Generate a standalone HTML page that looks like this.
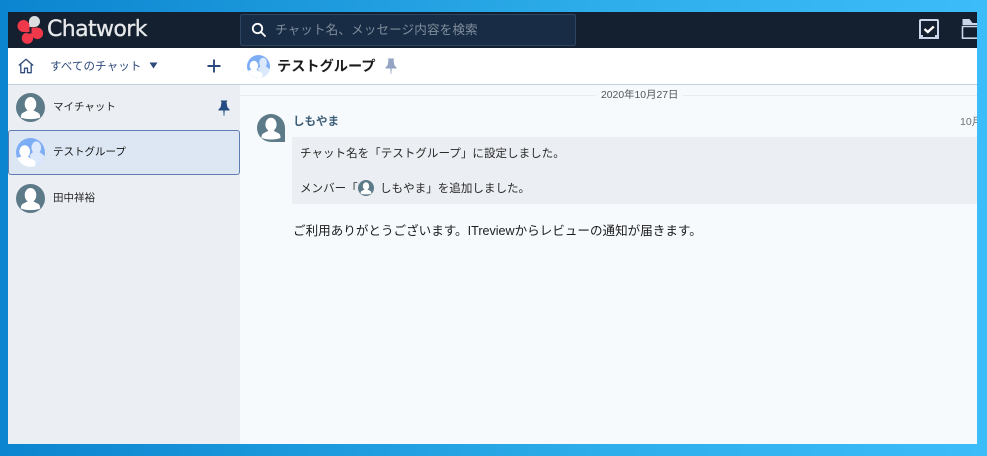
<!DOCTYPE html>
<html lang="ja">
<head>
<meta charset="utf-8">
<style>
html,body{margin:0;padding:0;width:987px;height:456px;overflow:hidden}
body{position:relative;background:linear-gradient(90deg,#0b85cf 0%,#1c98dc 30%,#2dade9 60%,#3cbdf9 100%);font-family:"Liberation Sans","Noto Sans CJK JP",sans-serif}
.a{position:absolute;white-space:nowrap}
svg{position:absolute;display:block}
#win{position:absolute;left:8px;top:12px;width:969px;height:432px;overflow:hidden;background:#f6fafd}
</style>
</head>
<body>
<div id="win">
  <div class="a" style="left:0;top:0;width:969px;height:36px;background:#14202f"></div>
  <div class="a" style="left:0;top:36px;width:969px;height:36px;background:#fff"></div>
  <div class="a" style="left:0;top:72px;width:232px;height:360px;background:#ebeef3"></div>
  <div class="a" style="left:0;top:72px;width:969px;height:1px;background:#c5d0df"></div>
  <div class="a" style="left:232px;top:83px;width:737px;height:1px;background:#e9edf2"></div>

  <!-- search -->
  <div class="a" style="left:232px;top:2px;width:334px;height:30px;background:#182d45;border:1px solid #2b4563;border-radius:2px"></div>
  <div class="a" style="left:267px;top:9px;font-size:12.6px;line-height:18px;color:#7f8c9b;letter-spacing:.1px">チャット名、メッセージ内容を検索</div>
  <div class="a" style="left:39px;top:4px;font-size:22px;line-height:28px;color:#e6e8eb;font-family:'DejaVu Sans','Liberation Sans',sans-serif;letter-spacing:-.6px;-webkit-text-stroke:.3px #e6e8eb">Chatwork</div>

  <!-- second row text -->
  <div class="a" style="left:42px;top:46px;font-size:11.5px;line-height:18px;color:#2f4a7c;letter-spacing:.1px">すべてのチャット</div>
  <div class="a" style="left:269px;top:45px;font-size:14.2px;line-height:20px;font-weight:bold;color:#1c1c1c">テストグループ</div>

  <!-- sidebar items -->
  <div class="a" style="left:0;top:118px;width:230px;height:43px;background:#dce7f3;border:1px solid #5f7db0;border-radius:3px"></div>
  <div class="a" style="left:45px;top:86px;font-size:10.5px;line-height:18px;color:#222">マイチャット</div>
  <div class="a" style="left:45px;top:131px;font-size:10.5px;line-height:18px;color:#111">テストグループ</div>
  <div class="a" style="left:45px;top:177px;font-size:10.5px;line-height:18px;color:#222">田中祥裕</div>

  <!-- messages -->
  <div class="a" style="left:588px;top:76px;padding:0 5px;background:#f6fafd;font-size:10.4px;line-height:16px;color:#555">2020年10月27日</div>
  <div class="a" style="left:285px;top:101px;font-size:11.5px;line-height:18px;font-weight:bold;color:#3f5f78">しもやま</div>
  <div class="a" style="left:952px;top:102px;font-size:10.5px;line-height:16px;color:#6e6e6e">10月</div>
  <div class="a" style="left:284px;top:125px;width:685px;height:67px;background:#ebeef2"></div>
  <div class="a" style="left:292px;top:133px;font-size:11.55px;line-height:18px;color:#2a2a2a">チャット名を「テストグループ」に設定しました。</div>
  <div class="a" style="left:292px;top:168px;font-size:11.55px;line-height:18px;color:#2a2a2a">メンバー「</div>
  <div class="a" style="left:372px;top:168px;font-size:11.55px;line-height:18px;color:#2a2a2a">しもやま」を追加しました。</div>
  <div class="a" style="left:285px;top:210px;font-size:12.57px;line-height:18px;color:#1c1c1c">ご利用ありがとうございます。ITreviewからレビューの通知が届きます。</div>
</div>

<!-- logo -->
<svg style="left:0;top:0" width="50" height="48" viewBox="0 0 50 48">
  <path d="M29 21.500a5.500 5.500 0 1 1 5.500 5.500H29z" fill="#dcdde0"/>
  <path d="M23.500 20a6 6 0 1 0 0 12h6v-6a6 6 0 0 0-6-6z" fill="#f0384b"/>
  <path d="M31.500 27.500h5.500a5.800 5.800 0 1 1-5.500 5.800z" fill="#f0384b"/>
  <path d="M32.500 33.500l.6 4.200a5.700 5.700 0 1 1-5.700-5.200l-.4 1z" fill="#f0384b"/>
</svg>

<!-- search icon -->
<svg style="left:250px;top:21px" width="18" height="18" viewBox="0 0 18 18" fill="none" stroke="#fff" stroke-width="1.800"><circle cx="7.500" cy="7.500" r="4.700"/><path d="M11 11l4 4" stroke-linecap="round"/></svg>

<!-- task icon -->
<svg style="left:918px;top:18px" width="23" height="23" viewBox="0 0 23 23" fill="none"><rect x="2" y="2" width="18" height="18" rx="1" stroke="#c9d6ea" stroke-width="2"/><path d="M6.500 11l3.300 3 6-5.500" stroke="#fff" stroke-width="2.400"/><path d="M1 17h4v4H1zM17 17h4v4h-4z" fill="#c9d6ea"/></svg>
<!-- folder icon -->
<svg style="left:961px;top:18px" width="16" height="23" viewBox="0 0 16 23" fill="none"><path d="M1.500 1h7l3 4h4.500v2H1.500z" fill="#c9d6ea"/><path d="M1.500 8.500h15M1.500 8v12.200h15" stroke="#c9d6ea" stroke-width="1.600"/></svg>

<!-- home -->
<svg style="left:18px;top:58px" width="16" height="16" viewBox="0 0 16 16" fill="none" stroke="#2f4a7c" stroke-width="1.300" stroke-linejoin="round"><path d="M.8 7.500L8 1.300l7.200 6.200M2.800 6.500v8.200h3.700v-4.500h3v4.500h3.700V6.500"/></svg>
<!-- caret -->
<svg style="left:149px;top:62px" width="9" height="7" viewBox="0 0 9 7"><path d="M.5 .5h8L4.500 6.500z" fill="#2f4a7c"/></svg>
<!-- plus -->
<svg style="left:207px;top:59px" width="14" height="14" viewBox="0 0 14 14"><path d="M7 .5v13M.5 7h13" stroke="#2f4a7c" stroke-width="1.900"/></svg>

<svg width="0" height="0" style="left:0;top:0"><defs><clipPath id="cc"><circle cx="15" cy="15" r="15"/></clipPath></defs></svg>
<!-- header group avatar -->
<svg style="left:247px;top:55px" width="23" height="23" viewBox="0 0 30 30">
  <g clip-path="url(#cc)"><rect width="30" height="30" fill="#7dadf5"/>
  <ellipse cx="21" cy="10" rx="5" ry="6.500" fill="#dce8fb"/><path d="M17 15h8l5 4v8l-10 3-6-12z" fill="#dce8fb"/>
  <ellipse cx="9" cy="14" rx="5.500" ry="6.500" fill="#fff"/><path d="M6 19h6l8 5v6H0v-9z" fill="#fff"/></g>
</svg>
<!-- header pin -->
<svg style="left:385px;top:58px" width="12" height="16" viewBox="0 0 12 16"><path d="M2.500 .5h7l-1 1.500.8 5 2.200 2.500v1H.5v-1L2.700 7l.8-5zM5.300 10.500h1.400L6.300 16h-.6z" fill="#94a5c4"/></svg>
<!-- sidebar pin -->
<svg style="left:218px;top:100px" width="12" height="16" viewBox="0 0 12 16"><path d="M2.500 .5h7l-1 1.500.8 5 2.200 2.500v1H.5v-1L2.700 7l.8-5zM5.300 10.500h1.400L6.300 16h-.6z" fill="#264b80"/></svg>

<!-- avatars -->
<svg style="left:16px;top:93px" width="29" height="29" viewBox="0 0 30 30"><g clip-path="url(#cc)"><rect width="30" height="30" fill="#5d7a88"/><ellipse cx="15" cy="11.500" rx="6" ry="7.300" fill="#fff"/><path d="M12 15h6v3l5 2.500c1.500 .8 2 2.500 2 5-3 1-6 1.500-10 1.500s-7-.5-10-1.500c0-2.500.5-4.200 2-5l5-2.500z" fill="#fff"/></g></svg>
<svg style="left:16px;top:138px" width="29" height="29" viewBox="0 0 30 30">
  <g clip-path="url(#cc)"><rect width="30" height="30" fill="#7dadf5"/>
  <ellipse cx="21" cy="10" rx="5" ry="6.500" fill="#dce8fb"/><path d="M17 15h8l5 4v8l-10 3-6-12z" fill="#dce8fb"/>
  <ellipse cx="9" cy="14" rx="5.500" ry="6.500" fill="#fff"/><path d="M6 19h6l8 5v6H0v-9z" fill="#fff"/></g>
</svg>
<svg style="left:16px;top:184px" width="29" height="29" viewBox="0 0 30 30"><g clip-path="url(#cc)"><rect width="30" height="30" fill="#5d7a88"/><ellipse cx="15" cy="11.500" rx="6" ry="7.300" fill="#fff"/><path d="M12 15h6v3l5 2.500c1.500 .8 2 2.500 2 5-3 1-6 1.500-10 1.500s-7-.5-10-1.500c0-2.500.5-4.200 2-5l5-2.500z" fill="#fff"/></g></svg>
<!-- message avatar -->
<svg style="left:257px;top:114px" width="28" height="28" viewBox="0 0 28 28"><path d="M14 0a14 14 0 0 1 14 14v14H14A14 14 0 0 1 14 0z" fill="#5d7a88"/><ellipse cx="14" cy="10.500" rx="5.600" ry="6.800" fill="#fff"/><path d="M11 14h6v3l4.500 2.300c1.500 .8 2 2.200 2 4.700-3 1-5.500 1.500-9.500 1.500S7.500 25 4.500 24c0-2.500.5-3.900 2-4.700L11 17z" fill="#fff"/></svg>
<!-- inline avatar -->
<svg style="left:358px;top:180px" width="16" height="16" viewBox="0 0 30 30"><g clip-path="url(#cc)"><rect width="30" height="30" fill="#5d7a88"/><ellipse cx="15" cy="11.500" rx="6" ry="7.300" fill="#fff"/><path d="M12 15h6v3l5 2.500c1.500 .8 2 2.500 2 5-3 1-6 1.500-10 1.500s-7-.5-10-1.500c0-2.500.5-4.200 2-5l5-2.500z" fill="#fff"/></g></svg>
</body>
</html>
